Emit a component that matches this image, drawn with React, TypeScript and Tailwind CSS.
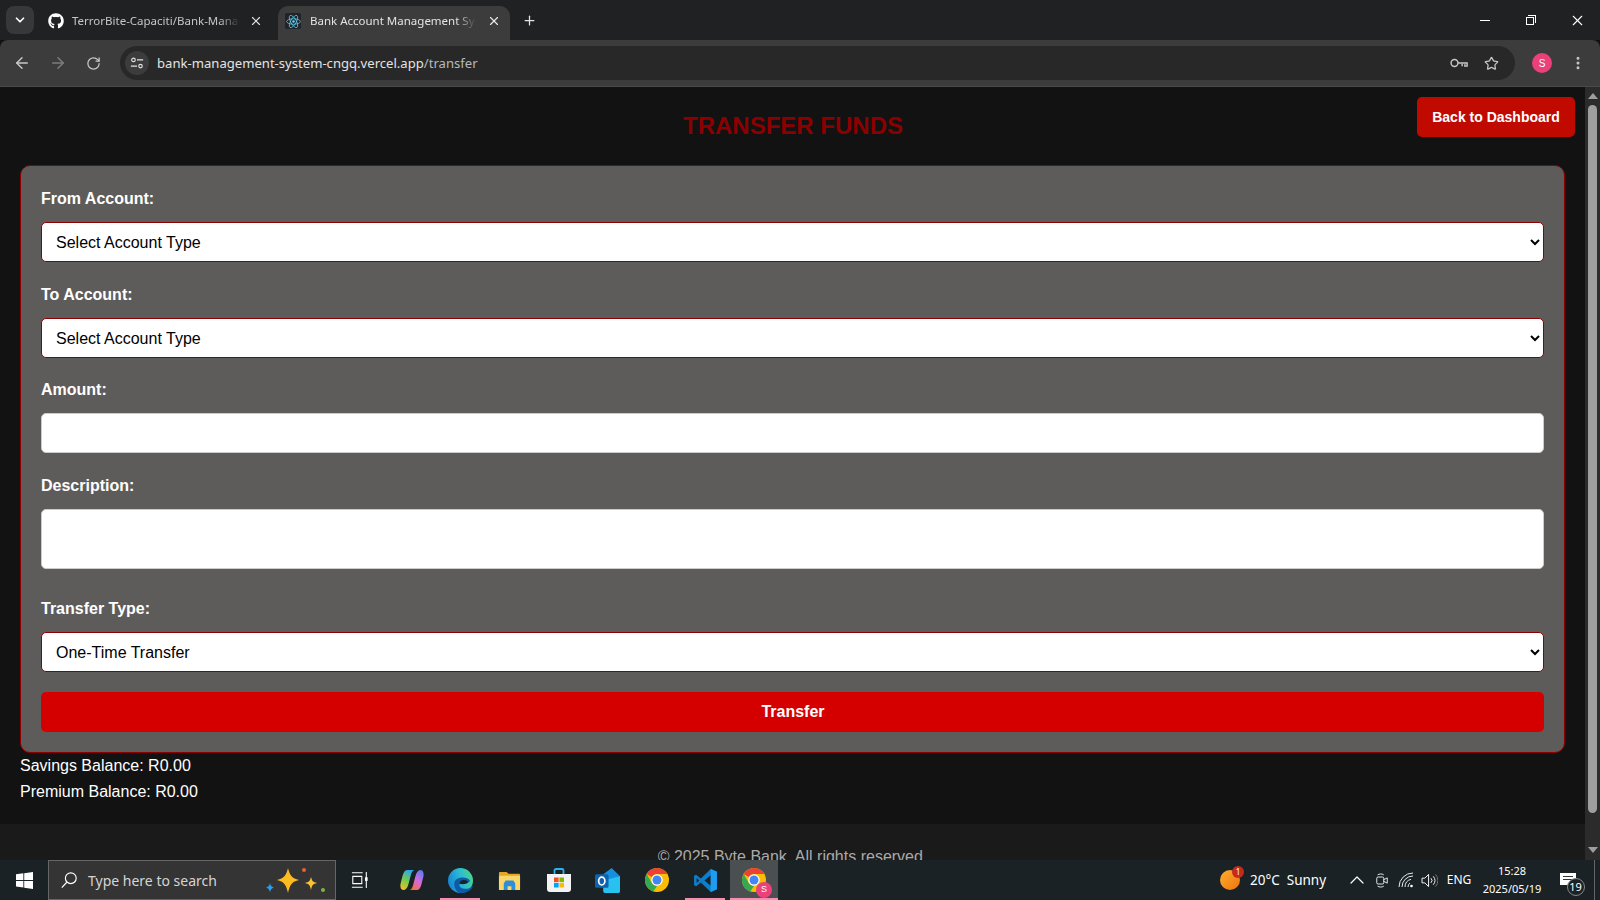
import React from 'react';
import { ArrowLeft, ArrowRight, ChevronDown, ChevronUp, EllipsisVertical, Plus, RotateCw, Star, X } from 'lucide-react';
import { FaGithub } from 'react-icons/fa';

const sans = 'font-["Liberation_Sans",Arial,sans-serif]';
const ui = 'font-["Noto_Sans",sans-serif]';

const ReactLogo = () => (
  <div className="w-[16px] h-[16px] bg-[#20232a] rounded-[2px] flex items-center justify-center">
    <svg viewBox="0 0 24 24" className="w-[15px] h-[15px]" fill="none" stroke="#61dafb" strokeWidth="1.1">
      <circle cx="12" cy="12" r="2" fill="#61dafb" stroke="none" />
      <ellipse cx="12" cy="12" rx="11" ry="4.4" />
      <ellipse cx="12" cy="12" rx="11" ry="4.4" transform="rotate(60 12 12)" />
      <ellipse cx="12" cy="12" rx="11" ry="4.4" transform="rotate(120 12 12)" />
    </svg>
  </div>
);

const ChromeIcon = ({ size = 24 }: { size?: number }) => (
  <svg viewBox="0 0 48 48" width={size} height={size}>
    <circle cx="24" cy="24" r="24" fill="#fbbc04" />
    <path d="M24 0a24 24 0 0 1 20.8 12H24a12 12 0 0 0-10.4 6L3.2 12A24 24 0 0 1 24 0z" fill="#ea4335" />
    <path d="M3.2 12 13.6 30a12 12 0 0 0 10.4 6l-7.4 11A24 24 0 0 1 3.2 12z" fill="#34a853" />
    <circle cx="24" cy="24" r="11.5" fill="#fff" />
    <circle cx="24" cy="24" r="9" fill="#4285f4" />
  </svg>
);

const WindowsLogo = () => (
  <svg viewBox="0 0 18 18" className="w-[17px] h-[17px]" fill="#fff">
    <path d="M0 2.5 7.8 1.4v7H0zM8.7 1.3 18 0v8.4H8.7zM0 9.4h7.8v7.1L0 15.4zM8.7 9.4H18V18l-9.3-1.3z" />
  </svg>
);

const Sparkles = () => (
  <svg viewBox="0 0 66 36" className="w-[66px] h-[36px]">
    <path d="M26 6c2 8 4 10 11 12-7 2-9 4-11 13-2-9-4-11-11-13 7-2 9-4 11-12z" fill="#fdbb1e" />
    <path d="M49 15c1 4 2 5 6 6-4 1-5 2-6 7-1-5-2-6-6-7 4-1 5-2 6-6z" fill="#fcc42c" />
    <circle cx="42" cy="8" r="2" fill="#e8622c" />
    <circle cx="61" cy="28" r="2" fill="#7cb53c" />
    <path d="M8 21c.6 3 1.500 3.600 4 4.500-2.500.8-3.400 2-4 5-.6-3-1.500-4.200-4-5 2.500-.9 3.400-1.500 4-4.500z" fill="#2b9df0" />
  </svg>
);

const TaskView = () => (
  <svg viewBox="0 0 20 20" className="w-[18px] h-[18px]" fill="none" stroke="#fff" strokeWidth="1.2">
    <path d="M1 2h12M1 18h12M2 6h10v8H2zM17 1v18" />
    <rect x="15.500" y="7" width="3" height="4" fill="#fff" stroke="none" />
  </svg>
);

const Copilot = () => (
  <svg viewBox="0 0 24 24" className="w-[24px] h-[24px]">
    <defs>
      <linearGradient id="cp1" x1="0.6" y1="0" x2="0.2" y2="1">
        <stop offset="0" stopColor="#2aa7e8" />
        <stop offset="0.55" stopColor="#7ccb4a" />
        <stop offset="1" stopColor="#f4c020" />
      </linearGradient>
      <linearGradient id="cp2" x1="0.8" y1="0" x2="0.3" y2="1">
        <stop offset="0" stopColor="#5a7cf0" />
        <stop offset="0.5" stopColor="#d46ae0" />
        <stop offset="1" stopColor="#f2703c" />
      </linearGradient>
    </defs>
    <path d="M7 2h8c-2 0-3 1.500-4 4.500L8.500 16c-1 3.500-2.500 6-5 6C1 22 0 19 .5 16l2-8C3.500 4 5 2 7 2z" fill="url(#cp1)" />
    <path d="M17 22H9c2 0 3-1.500 4-4.500L15.500 8c1-3.500 2.500-6 5-6 2.500 0 3.500 3 3 6l-2 8c-1 4-2.500 6-4.500 6z" fill="url(#cp2)" />
  </svg>
);

const EdgeIcon = () => (
  <svg viewBox="0 0 24 24" className="w-[25px] h-[25px]">
    <defs>
      <linearGradient id="eg1" x1="0" y1="0.6" x2="1" y2="0.3">
        <stop offset="0" stopColor="#1585d4" />
        <stop offset="0.55" stopColor="#2bbcd4" />
        <stop offset="1" stopColor="#4bd488" />
      </linearGradient>
    </defs>
    <circle cx="12" cy="12" r="12" fill="url(#eg1)" />
    <path d="M6 15c0-4 4-6 8-6 3 0 6 1 7 3 0 2-3 3-6 3H11c-1 3 2 5 6 5 3 0 5-1 7-3-1 4-6 7-11 7-4 0-7-4-7-9z" fill="#0e5aa6" />
    <path d="M11 15c.5-2.500 2-3.500 4-3.500 2.500 0 4 1 4 2.500-1 1-3 1.500-4.500 1.500z" fill="#1a2226" />
  </svg>
);

const FolderIcon = () => (
  <svg viewBox="0 0 24 24" className="w-[23px] h-[23px]">
    <path d="M1 4a1 1 0 0 1 1-1h7l2 2h11a1 1 0 0 1 1 1v15a1 1 0 0 1-1 1H2a1 1 0 0 1-1-1z" fill="#e4a725" />
    <rect x="1" y="7" width="22" height="15" rx="1" fill="#fbd668" />
    <path d="M6 22v-7l2-3h8l2 3v7h-4v-4h-4v4z" fill="#2b8fdc" />
  </svg>
);

const StoreIcon = () => (
  <svg viewBox="0 0 24 24" className="w-[24px] h-[24px]">
    <path d="M7.500 7V2.500a1.500 1.500 0 0 1 1.500-1.500h6a1.500 1.500 0 0 1 1.500 1.500V7" fill="none" stroke="#2ab2ee" strokeWidth="1.800" />
    <path d="M0 6h24v15a3 3 0 0 1-3 3H3a3 3 0 0 1-3-3z" fill="#f3f3f3" />
    <rect x="7" y="9.500" width="4.600" height="4.600" fill="#f25022" />
    <rect x="12.400" y="9.500" width="4.600" height="4.600" fill="#7fba00" />
    <rect x="7" y="14.900" width="4.600" height="4.600" fill="#00a4ef" />
    <rect x="12.400" y="14.900" width="4.600" height="4.600" fill="#ffb900" />
  </svg>
);

const OutlookIcon = () => (
  <svg viewBox="0 0 24 24" className="w-[25px] h-[25px]">
    <path d="M8 6l8-6 8 8v14a2 2 0 0 1-2 2H10a2 2 0 0 1-2-2z" fill="#1490df" />
    <path d="M8 12l16-4v14a2 2 0 0 1-2 2H10a2 2 0 0 1-2-2z" fill="#28c2f0" />
    <rect x="0" y="6" width="13" height="13" rx="1.500" fill="#0f62ae" />
    <ellipse cx="6.500" cy="12.500" rx="3" ry="3.800" fill="none" stroke="#fff" strokeWidth="1.600" />
  </svg>
);

const VsCodeIcon = () => (
  <svg viewBox="0 0 24 24" className="w-[25px] h-[25px]">
    <path d="M17 1 7.500 10 3 6.500 1 7.500v9l2 1 4.500-3.500L17 23l6-2.500v-17zM17 7v10l-6-5zM3.500 9.500 6 12l-2.500 2.500z" fill="#0a7fcc" />
    <path d="M17 1l6 2.500v17L17 23z" fill="#1f9cf0" />
  </svg>
);

const TaskCell = ({ children, running, active }: { children: React.ReactNode; running?: boolean; active?: boolean }) => (
  <div className={`relative h-[40px] flex items-center justify-center ${active ? 'w-[48px] bg-[#4a4f52]' : 'w-[49px]'}`}>
    {children}
    {running && <div className={`absolute bottom-0 h-[2px] bg-[#f48fb1] ${active ? 'inset-x-0' : 'left-[4px] right-[5px]'}`} />}
  </div>
);

const ProfileDot = ({ className }: { className: string }) => (
  <div className={`rounded-full bg-[#ec407a] text-white flex items-center justify-center ${sans} ${className}`}>S</div>
);

const labelClass = `block text-white font-bold text-base leading-[18px] pt-[4px] mb-[14px] ${sans}`;
const selectClass = `block w-full h-[40px] px-[10px] text-base text-black bg-white border border-[#8b0000] rounded-[5px] ${sans}`;
const inputClass = 'block w-full bg-white border border-[#cccccc] rounded-[5px]';

const TransferForm = () => (
  <form className={`bg-[#5e5c5b] border border-[#8b0000] rounded-[10px] p-[20px] ${sans}`}>
    <div className="mb-[20px]">
      <label className={labelClass}>From Account:</label>
      <select className={selectClass}>
        <option>Select Account Type</option>
      </select>
    </div>
    <div className="mb-[19px]">
      <label className={labelClass}>To Account:</label>
      <select className={selectClass}>
        <option>Select Account Type</option>
      </select>
    </div>
    <div className="mb-[20px]">
      <label className={labelClass}>Amount:</label>
      <input type="number" className={`${inputClass} h-[40px]`} />
    </div>
    <div className="mb-[27px]">
      <label className={labelClass}>Description:</label>
      <textarea className={`${inputClass} h-[60px] resize-none`} />
    </div>
    <div className="mb-[20px]">
      <label className={labelClass}>Transfer Type:</label>
      <select className={selectClass}>
        <option>One-Time Transfer</option>
      </select>
    </div>
    <button type="button" className="block w-full h-[40px] pl-[1px] bg-[#d40000] text-white font-bold text-base rounded-[5px]">Transfer</button>
  </form>
);

const App: React.FC = () => {
  return (
    <div className="w-[1600px] h-[900px] flex flex-col overflow-hidden bg-[#121212]">
      {/* tab strip */}
      <div className={`h-[40px] shrink-0 bg-[#1f2122] flex items-end text-[11.500px] ${ui}`}>
        <div className="self-start mt-[6px] ml-[6px] w-[28px] h-[28px] rounded-[8px] bg-[#363839] flex items-center justify-center">
          <ChevronDown className="w-[14px] h-[14px] text-white" strokeWidth={3} />
        </div>
        <div className="w-[244px] h-[34px] flex items-center pl-[14px] pr-[14px] pb-[4px] text-[#c4c7c5]">
          <FaGithub className="w-[16px] h-[16px] text-white shrink-0" />
          <span className="ml-[8px] w-[168px] overflow-hidden whitespace-nowrap [mask-image:linear-gradient(to_right,black_88%,transparent)]">TerrorBite-Capaciti/Bank-Management</span>
          <X className="ml-[9px] w-[14px] h-[14px] text-[#e0e0e0]" strokeWidth={2} />
        </div>
        <div className="w-[232px] h-[34px] rounded-t-[10px] bg-[#3c3c3c] flex items-center pl-[7px] pb-[4px] text-[#e3e3e3]">
          <ReactLogo />
          <span className="ml-[9px] w-[166px] overflow-hidden whitespace-nowrap [mask-image:linear-gradient(to_right,black_88%,transparent)]">Bank Account Management System</span>
          <X className="ml-[11px] w-[14px] h-[14px] text-[#e8e8e8]" strokeWidth={2} />
        </div>
        <Plus className="self-center ml-[12px] w-[15px] h-[15px] text-[#e3e3e3]" strokeWidth={2} />
        <div className="ml-auto self-start flex h-[40px] text-white">
          <div className="w-[46px] flex items-center justify-center"><div className="w-[10px] h-[1px] bg-white" /></div>
          <div className="w-[46px] flex items-center justify-center">
            <div className="relative w-[10px] h-[10px]">
              <div className="absolute left-0 bottom-0 w-[8px] h-[8px] border border-white bg-[#1f2122]" />
              <div className="absolute right-0 top-0 w-[8px] h-[8px] border-t border-r border-white" />
            </div>
          </div>
          <div className="w-[46px] flex items-center justify-center"><X className="w-[17px] h-[17px]" strokeWidth={1.500} /></div>
        </div>
      </div>

      {/* toolbar */}
      <div className={`h-[47px] shrink-0 bg-[#3c3c3c] rounded-t-[8px] border-b border-[#4a4a4a] flex items-center ${ui}`}>
        <ArrowLeft className="ml-[13px] w-[18px] h-[18px] text-[#c7c7c7]" strokeWidth={2} />
        <ArrowRight className="ml-[18px] w-[18px] h-[18px] text-[#7c7c7c]" strokeWidth={2} />
        <RotateCw className="ml-[19px] w-[15px] h-[15px] text-[#c7c7c7]" strokeWidth={2} />
        <div className="ml-[19px] w-[1395px] h-[34px] rounded-full bg-[#282828] flex items-center pl-[5px] pr-[16px]">
          <div className="w-[24px] h-[24px] rounded-full bg-[#3c3c3c] flex items-center justify-center">
            <svg viewBox="0 0 16 16" className="w-[14px] h-[14px]" fill="none" stroke="#e3e3e3" strokeWidth="1.300">
              <circle cx="4" cy="4.500" r="2" />
              <path d="M8 4.500h7M1 11.500h7" />
              <circle cx="12" cy="11.500" r="2" />
            </svg>
          </div>
          <span className="ml-[8px] pt-[1px] text-[13.100px] text-[#e3e3e3]">bank-management-system-cngq.vercel.app<span className="text-[#b9b9b9]">/transfer</span></span>
          <svg viewBox="0 0 20 12" className="ml-auto w-[18px] h-[12px]" fill="none" stroke="#c7c7c7" strokeWidth="1.600">
            <circle cx="5" cy="6" r="3.800" />
            <path d="M9 6h10v3.500h-2.500V7.500M13.500 7v2.500" />
          </svg>
          <Star className="ml-[16px] w-[15px] h-[15px] text-[#c7c7c7]" strokeWidth={2} />
        </div>
        <ProfileDot className="ml-[17px] w-[20px] h-[20px] text-[10px]" />
        <EllipsisVertical className="ml-[18px] w-[16px] h-[16px] text-[#c7c7c7]" strokeWidth={2.500} />
      </div>

      {/* page */}
      <div className="flex-1 min-h-0 flex">
        <div className="flex-1 min-w-0 overflow-hidden bg-[#121212]">
          <div className="px-[20px] pt-[10px]">
            <header className="relative h-[68px]">
              <h1 className={`pt-[15px] pl-[1px] text-center text-2xl leading-[28px] font-bold text-[#8b0000] ${sans}`}>TRANSFER FUNDS</h1>
              <button type="button" className={`absolute right-[-10px] top-0 w-[158px] h-[40px] bg-[#c00a00] text-white text-[14px] font-bold rounded-[5px] ${sans}`}>Back to Dashboard</button>
            </header>
            <TransferForm />
            <div className={`text-white text-base ${sans}`}>
              <p className="leading-[26px]">Savings Balance: R0.00</p>
              <p className="leading-[26px]">Premium Balance: R0.00</p>
            </div>
          </div>
          <footer className={`mt-[19px] h-[60px] pt-[24px] bg-[#1a1a1a] text-center text-base leading-[18px] text-[#aaaaaa] ${sans}`}>
            © 2025 Byte Bank. All rights reserved.
          </footer>
        </div>
        {/* scrollbar */}
        <div className="w-[15px] shrink-0 bg-[#2b2b2b] flex flex-col items-center">
          <svg viewBox="0 0 10 6" className="mt-[6px] w-[10px] h-[6px]" fill="#9e9e9e"><path d="M5 0l5 6H0z" /></svg>
          <div className="mt-[6px] w-[9px] h-[708px] rounded-full bg-[#9e9e9e]" />
          <svg viewBox="0 0 10 6" className="mt-auto mb-[7px] w-[10px] h-[6px]" fill="#9e9e9e"><path d="M5 6l5-6H0z" /></svg>
        </div>
      </div>

      {/* windows taskbar */}
      <div className={`h-[40px] shrink-0 bg-[#1a2226] flex items-center text-white ${ui}`}>
        <div className="w-[48px] flex items-center justify-center"><WindowsLogo /></div>
        <div className="w-[288px] h-[40px] bg-[#343434] border border-[#666666] flex items-center pl-[11px] pr-[7px]">
          <svg viewBox="0 0 20 20" className="w-[18px] h-[18px]" fill="none" stroke="#fff" strokeWidth="1.300">
            <circle cx="12" cy="8" r="6" />
            <path d="M7.500 12.500 2 18.500" />
          </svg>
          <span className="ml-[10px] text-[14px] text-[#d4d4d4]">Type here to search</span>
          <div className="ml-auto"><Sparkles /></div>
        </div>
        <div className="w-[48px] flex items-center justify-center"><TaskView /></div>
        <div className="w-[3px]" />
        <TaskCell><Copilot /></TaskCell>
        <TaskCell running><EdgeIcon /></TaskCell>
        <TaskCell><FolderIcon /></TaskCell>
        <TaskCell><StoreIcon /></TaskCell>
        <TaskCell><OutlookIcon /></TaskCell>
        <TaskCell><ChromeIcon /></TaskCell>
        <TaskCell running><VsCodeIcon /></TaskCell>
        <TaskCell running active>
          <div className="relative">
            <ChromeIcon />
            <ProfileDot className="absolute right-[-6px] bottom-[-6px] w-[16px] h-[16px] text-[9px]" />
          </div>
        </TaskCell>

        <div className="ml-auto flex items-center h-[40px]">
          <div className="w-[125px] flex items-center">
            <div className="relative w-[20px] h-[20px] rounded-full bg-gradient-to-br from-[#fbb02c] to-[#f0700f]">
              <div className="absolute top-[-4px] right-[-4px] w-[12px] h-[12px] rounded-full bg-[#c42b1c] text-[8px] leading-[12px] text-center">1</div>
            </div>
            <span className="ml-[10px] text-[13.500px] whitespace-nowrap">20°C&nbsp; Sunny</span>
          </div>
          <div className="w-[24px] flex justify-center"><ChevronUp className="w-[24px] h-[24px]" strokeWidth={1.200} /></div>
          <div className="w-[25px] flex justify-center">
            <svg viewBox="0 0 16 18" className="w-[14px] h-[17px]" fill="none" stroke="#fff" strokeWidth="1">
              <rect x="2" y="5" width="8" height="8" rx="1.500" />
              <path d="M10 8l4-2v6l-4-2M3 2.500c2-1.300 5-1.300 7 0M3 15.500c2 1.300 5 1.300 7 0" />
            </svg>
          </div>
          <div className="w-[24px] flex justify-center">
            <svg viewBox="0 0 16 16" className="w-[16px] h-[16px]" fill="none" stroke="#e8e8e8" strokeWidth="1">
              <path d="M1 15a14 14 0 0 1 14-14M4 15A11 11 0 0 1 15 4M7 15a8 8 0 0 1 6-7.700M10 15a5 5 0 0 1 2-4" />
              <circle cx="13.500" cy="14" r="1.300" fill="#fff" stroke="none" />
            </svg>
          </div>
          <div className="w-[22px] flex justify-center">
            <svg viewBox="0 0 18 16" className="w-[17px] h-[15px]" fill="none" stroke="#fff" strokeWidth="1">
              <path d="M1 5.500h3L8 1.500v13l-4-4H1z" />
              <path d="M10.500 5.500a3.500 3.500 0 0 1 0 5M13 3.500a7 7 0 0 1 0 9" />
              <path d="M15.500 1.500a10 10 0 0 1 0 13" stroke="#777" />
            </svg>
          </div>
          <div className="w-[38px] text-center text-[12px]">ENG</div>
          <div className="w-[68px] text-center text-[11px] leading-[18px]">
            <div>15:28</div>
            <div>2025/05/19</div>
          </div>
          <div className="w-[43px] flex justify-center">
            <div className="relative w-[16px] h-[12px] bg-white flex flex-col gap-[2px] pt-[3px] px-[3px] -translate-y-[1px]">
              <div className="h-[1px] bg-[#333]" />
              <div className="h-[1px] bg-[#333]" />
              <div className="absolute right-[-9px] bottom-[-11px] w-[18px] h-[18px] rounded-full bg-[#1a2226] border border-[#888] text-[11px] leading-[16px] text-center">19</div>
            </div>
          </div>
          <div className="w-[6px] h-[40px] border-r border-[#666] mr-[5px]" />
        </div>
      </div>
    </div>
  );
};

export default App;
